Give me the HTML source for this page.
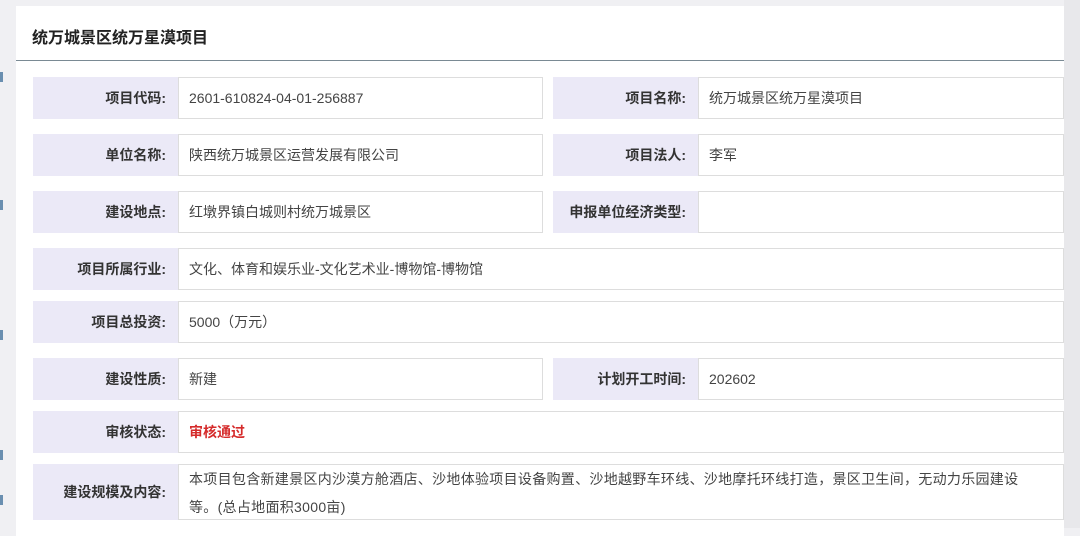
<!DOCTYPE html>
<html><head><meta charset="utf-8"><style>
body{margin:0;width:1080px;height:528px;background:#f0f0f3;font-family:"Liberation Sans","Noto Sans CJK SC",sans-serif;overflow:hidden;position:relative}
.card{position:absolute;left:16px;top:6px;width:1048px;height:530px;background:#fff}
.title{position:absolute;left:32px;top:24px;font-size:16px;font-weight:bold;color:#222}
.hl{position:absolute;left:16px;top:60px;width:1048px;height:1px;background:#7a8a94}
.lb,.vl{position:absolute;box-sizing:border-box;font-size:14px;color:#444;display:flex;align-items:center}
.lb{background:#ebe9f7;justify-content:flex-end;padding-right:12px;font-weight:bold;color:#333}
.vl{background:#fff;border:1px solid #ddd;padding-left:10px}
.strip{position:absolute;left:0;width:3px;height:10px;background:#6a8fb0}
</style></head><body>
<div class="card"></div>
<div style="position:absolute;left:1064px;top:0;width:16px;height:528px;background:#e8e8eb"></div>
<div class="title">统万城景区统万星漠项目</div>
<div class="hl"></div>
<div class="strip" style="top:72px"></div><div class="strip" style="top:200px"></div><div class="strip" style="top:330px"></div><div class="strip" style="top:450px"></div><div class="strip" style="top:495px"></div>

<div class="lb" style="left:33px;top:77px;width:145px;height:42px">项目代码:</div>
<div class="vl" style="left:178px;top:77px;width:365px;height:42px">2601-610824-04-01-256887</div>
<div class="lb" style="left:553px;top:77px;width:145px;height:42px">项目名称:</div>
<div class="vl" style="left:698px;top:77px;width:366px;height:42px">统万城景区统万星漠项目</div>

<div class="lb" style="left:33px;top:134px;width:145px;height:42px">单位名称:</div>
<div class="vl" style="left:178px;top:134px;width:365px;height:42px">陕西统万城景区运营发展有限公司</div>
<div class="lb" style="left:553px;top:134px;width:145px;height:42px">项目法人:</div>
<div class="vl" style="left:698px;top:134px;width:366px;height:42px">李军</div>

<div class="lb" style="left:33px;top:191px;width:145px;height:42px">建设地点:</div>
<div class="vl" style="left:178px;top:191px;width:365px;height:42px">红墩界镇白城则村统万城景区</div>
<div class="lb" style="left:553px;top:191px;width:145px;height:42px">申报单位经济类型:</div>
<div class="vl" style="left:698px;top:191px;width:366px;height:42px"></div>

<div class="lb" style="left:33px;top:248px;width:145px;height:42px">项目所属行业:</div>
<div class="vl" style="left:178px;top:248px;width:886px;height:42px">文化、体育和娱乐业-文化艺术业-博物馆-博物馆</div>

<div class="lb" style="left:33px;top:301px;width:145px;height:42px">项目总投资:</div>
<div class="vl" style="left:178px;top:301px;width:886px;height:42px">5000（万元）</div>

<div class="lb" style="left:33px;top:358px;width:145px;height:42px">建设性质:</div>
<div class="vl" style="left:178px;top:358px;width:365px;height:42px">新建</div>
<div class="lb" style="left:553px;top:358px;width:145px;height:42px">计划开工时间:</div>
<div class="vl" style="left:698px;top:358px;width:366px;height:42px">202602</div>

<div class="lb" style="left:33px;top:411px;width:145px;height:42px">审核状态:</div>
<div class="vl" style="left:178px;top:411px;width:886px;height:42px;color:#d52b2b;font-weight:bold">审核通过</div>

<div class="lb" style="left:33px;top:464px;width:145px;height:56px">建设规模及内容:</div>
<div class="vl" style="left:178px;top:464px;width:886px;height:56px;line-height:28px;display:block;padding-top:0;padding-right:25px;letter-spacing:0.3px">本项目包含新建景区内沙漠方舱酒店、沙地体验项目设备购置、沙地越野车环线、沙地摩托环线打造，景区卫生间，无动力乐园建设<br>等。(总占地面积3000亩)</div>
</body></html>
